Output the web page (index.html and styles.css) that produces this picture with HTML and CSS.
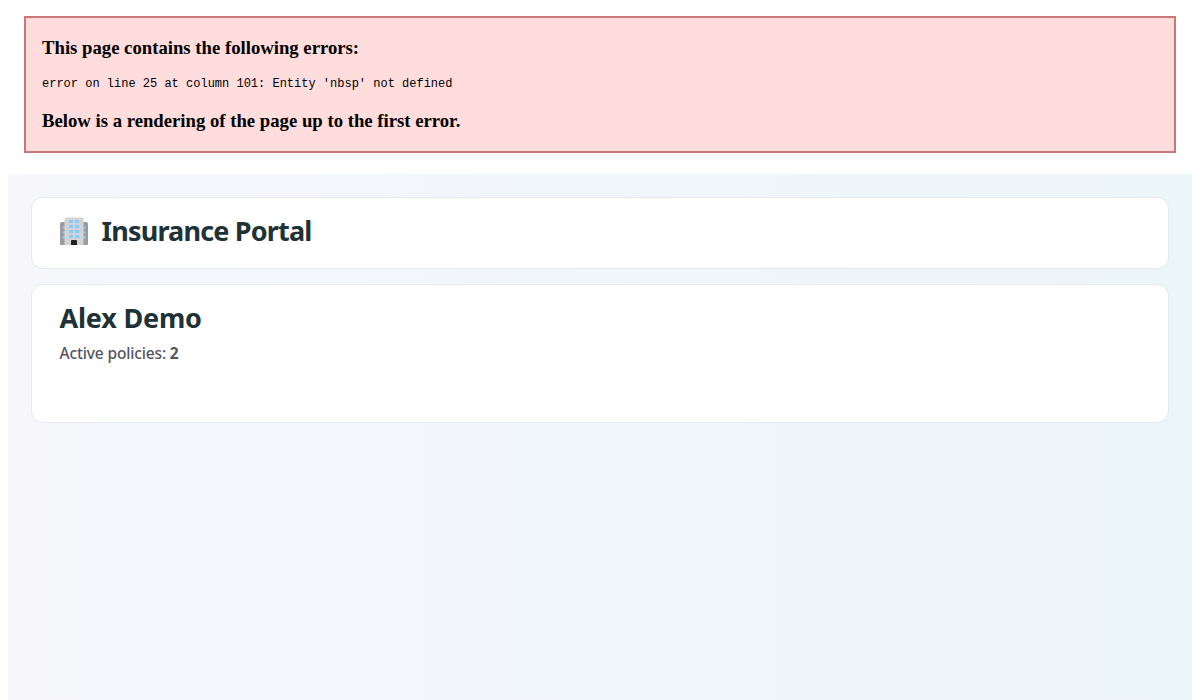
FILE: index.html
```
<!DOCTYPE html>
<html lang="en">
<head>
<meta charset="utf-8">
<title>Insurance Portal</title>
<link rel="stylesheet" href="styles.css">
</head>
<body>
<section class="parser-error">
  <h3 class="error-heading">This page contains the following errors:</h3>
  <div class="error-detail">error on line 25 at column 101: Entity 'nbsp' not defined</div>
  <h3 class="error-heading">Below is a rendering of the page up to the first error.</h3>
</section>
<main class="portal">
  <header class="card brand">
    <svg class="brand-icon" viewBox="0 0 28 28" aria-hidden="true">
      <path fill="#9b9b9b" d="M0 28V7Q0 5 2 5H26Q28 5 28 7V28Z"/>
      <path fill="#83caff" d="M2.5 9.5h3v2.3h-3zm0 4.8h3v2.3h-3zm0 4.8h3v2.3h-3zM22.5 9.5h3v2.3h-3zm0 4.8h3v2.3h-3zm0 4.8h3v2.3h-3z"/>
      <path fill="#d3d3d3" d="M4.5 28V2.5Q4.500 .5 6.500 .5H21.5Q23.500 .5 23.500 2.5V28Z"/>
      <path fill="#83caff" d="M9 3h4v3H9zm6 0h4v3h-4zM9 8h4v3H9zm6 0h4v3h-4zM9 13h4v3H9zm6 0h4v3h-4zM9 18h4v3H9zm6 0h4v3h-4z"/>
      <path fill="#212121" d="M11 28v-4q0-1 1-1h4q1 0 1 1v4z"/>
    </svg>
    <h1 class="title brand-title">Insurance Portal</h1>
  </header>
  <section class="card profile">
    <h2 class="title profile-title">Alex Demo</h2>
    <p class="policies">Active policies: <strong class="count">2</strong></p>
  </section>
</main>
</body>
</html>
```
FILE: styles.css
```
* { box-sizing: border-box; }
html { height: 100%; background: #fff; }
body { margin: 0; height: 100%; overflow: hidden; display: flex; flex-direction: column; padding: 16px 8px 0; }
.parser-error { flex: none; height: 137px; margin: 0 16px 21px; padding: 19px 16px 0; border: 2px solid #c77; background: #fdd; color: #000; font-family: "Liberation Serif", serif; }
.error-heading { margin: 0; font-size: 18.72px; line-height: 22px; }
.error-detail { margin: 18px 0 19px; font: 12px/14px "Liberation Mono", monospace; }
.portal { flex: 1; padding: 23px; background: linear-gradient(90deg, #f6f6fb, #f1f6fa 50%, #ecf5f8); font-family: "Noto Sans", sans-serif; }
.card { border: 1px solid #e6eaf1; border-radius: 12px; background: #fff; }
.brand { display: flex; align-items: flex-start; gap: 13.5px; height: 72px; margin-bottom: 15px; padding: 19px 28px 0; }
.brand-icon { flex: none; width: 28px; height: 28px; }
.title { margin: 0; color: #203235; font-size: 27px; line-height: 36px; font-weight: 700; white-space: nowrap; }
.brand-title { margin-top: -4px; letter-spacing: -0.82px; }
.profile { height: 139px; padding: 15px 27.5px; }
.profile-title { letter-spacing: -0.2px; }
.policies { margin: 7px 0 0; color: #555461; font-size: 15.5px; line-height: 20px; font-weight: 500; letter-spacing: -0.15px; }
.count { font-weight: 700; }
```
